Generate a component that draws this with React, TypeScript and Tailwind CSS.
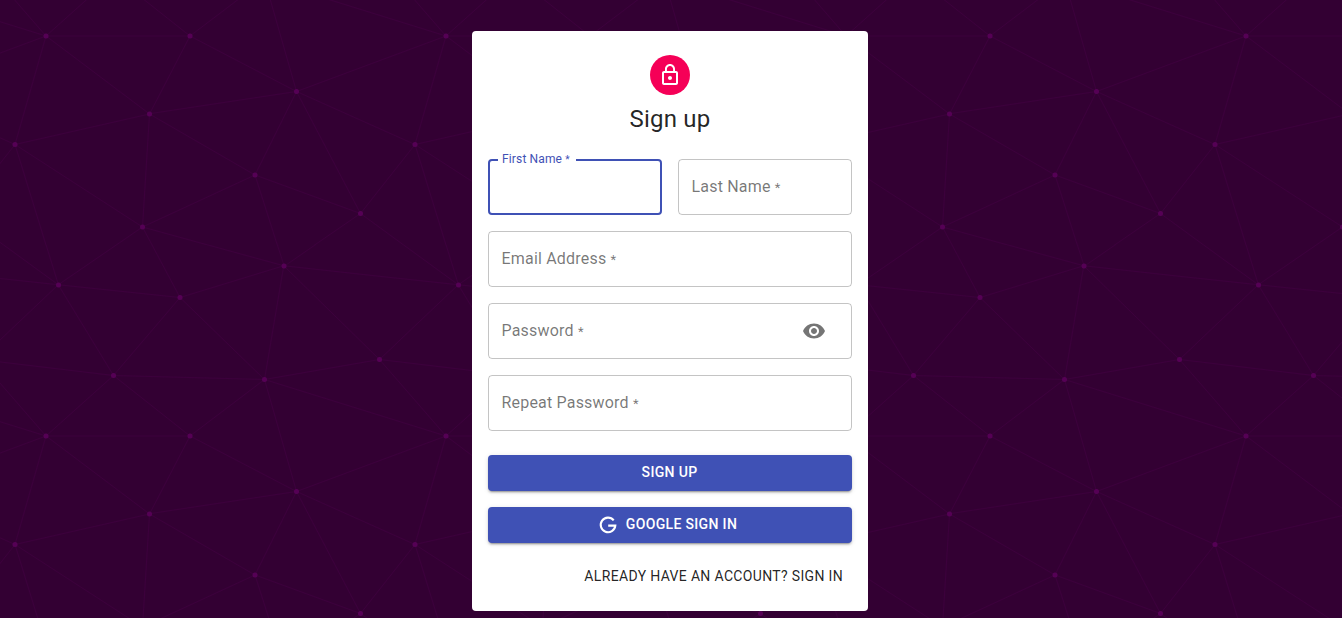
import React from "react";

const NODES: [number, number][] = [
  [769, 229], [539, 269], [603, 493], [731, 737], [520, 660], [309, 538], [295, 764],
  [40, 599], [102, 382], [127, 80], [370, 105], [578, 42], [237, 261], [390, 382],
];

const LINES = [
  "M769 229L1037 260.9M927 880L731 737 520 660 309 538 40 599 295 764 126.5 879.5 40 599-197 493 102 382-31 229 126.5 79.5-69-63",
  "M-31 229L237 261 390 382 603 493 308.5 537.5 101.5 381.5M370 905L295 764",
  "M520 660L578 842 731 737 840 599 603 493 520 660 295 764 309 538 390 382 539 269 769 229 577.5 41.5 370 105 295-36 126.5 79.5 237 261 102 382 40 599-69 737 127 880",
  "M520-140L578.5 42.5 731-63M603 493L539 269 237 261 370 105M902 382L539 269M390 382L102 382",
  "M-222 42L126.5 79.5 370 105 539 269 577.5 41.5 927 80 769 229 902 382 603 493 731 737M295-36L577.5 41.5M578 842L295 764M40-201L127 80M102 382L-261 269",
];

function Constellation() {
  return (
    <svg className="absolute inset-0 h-full w-full" aria-hidden="true">
      <defs>
        <pattern
          id="constellation"
          width="800"
          height="800"
          patternUnits="userSpaceOnUse"
          patternTransform="translate(-5 -155) scale(0.5)"
        >
          <g fill="none" stroke="#440044" strokeWidth="1">
            {LINES.map((d) => (
              <path key={d} d={d} />
            ))}
          </g>
          <g fill="#550055">
            {NODES.map(([cx, cy]) => (
              <circle key={`${cx}-${cy}`} cx={cx} cy={cy} r="5" />
            ))}
          </g>
        </pattern>
      </defs>
      <rect width="100%" height="100%" fill="url(#constellation)" />
    </svg>
  );
}

function Field({ label, children }: { label: string; children?: React.ReactNode }) {
  return (
    <div className="flex h-14 w-full items-center justify-between rounded border border-black/[0.23] pr-[25px] pl-[12.5px]">
      <label className="text-base leading-4 tracking-[0.012em] text-black/[0.54]">
        {label} <span className="text-[13px] leading-none">*</span>
      </label>
      {children}
    </div>
  );
}

function FocusedField({ label }: { label: string }) {
  return (
    <fieldset className="-mt-[5px] h-[61px] w-full rounded border-2 border-[#3f51b5] pl-2">
      <legend className="h-[11px] w-[78px] pl-1 text-xs leading-[11px] tracking-[0.012em] whitespace-nowrap text-[#3f51b5]">
        {label} <span className="text-[10px] leading-none">*</span>
      </legend>
    </fieldset>
  );
}

function ContainedButton({ children }: { children: React.ReactNode }) {
  return (
    <button className="flex h-9 w-full items-center justify-center rounded bg-[#3f51b5] pr-px pb-0.5 text-sm font-medium tracking-[0.024em] text-white uppercase shadow-[0_3px_1px_-2px_rgba(0,0,0,0.2),0_2px_2px_0_rgba(0,0,0,0.14),0_1px_5px_0_rgba(0,0,0,0.12)]">
      {children}
    </button>
  );
}

export default function App() {
  return (
    <main className="relative flex h-screen justify-center overflow-hidden bg-[#330033] pt-[31px] pr-0.5 font-[Roboto,sans-serif]">
      <Constellation />
      <section className="relative flex h-[580px] w-[396px] flex-col items-center rounded bg-white px-4 pt-6">
        <div className="flex h-10 w-10 shrink-0 items-center justify-center rounded-full bg-[#f50057]">
          <svg className="h-6 w-6" viewBox="0 0 24 24" fill="white">
            <path d="M12 17c1.1 0 2-.9 2-2s-.9-2-2-2-2 .9-2 2 .9 2 2 2zm6-9h-1V6c0-2.76-2.24-5-5-5S7 3.24 7 6v2H6c-1.1 0-2 .9-2 2v10c0 1.1.9 2 2 2h12c1.1 0 2-.9 2-2V10c0-1.1-.9-2-2-2zM8.9 6c0-1.71 1.39-3.1 3.1-3.1s3.1 1.39 3.1 3.1v2H8.9V6zM18 20H6V10h12v10z" />
          </svg>
        </div>
        <h1 className="mt-2 text-2xl leading-8 font-normal tracking-[0.2px] text-black/[0.87]">Sign up</h1>
        <form className="mt-6 flex w-full flex-col gap-4">
          <div className="grid grid-cols-2 gap-4">
            <FocusedField label="First Name" />
            <Field label="Last Name" />
          </div>
          <Field label="Email Address" />
          <Field label="Password">
            <svg className="h-6 w-6" viewBox="0 0 24 24" fill="rgba(0,0,0,0.54)">
              <path d="M12 4.5C7 4.5 2.73 7.61 1 12c1.73 4.39 6 7.5 11 7.5s9.27-3.11 11-7.5c-1.73-4.39-6-7.5-11-7.5zM12 17c-2.76 0-5-2.24-5-5s2.24-5 5-5 5 2.24 5 5-2.24 5-5 5zm0-8c-1.66 0-3 1.34-3 3s1.34 3 3 3 3-1.34 3-3-1.34-3-3-3z" />
            </svg>
          </Field>
          <Field label="Repeat Password" />
          <div className="mt-2 flex flex-col gap-4">
            <ContainedButton>Sign up</ContainedButton>
            <ContainedButton>
              <svg className="mt-0.5 mr-2 -ml-1 h-5 w-5" viewBox="0 0 20 20" fill="none" stroke="white" strokeWidth="2.1">
                <path d="M15.7 5.3A7.3 7.3 0 1 0 17.3 10.6H10.2" />
              </svg>
              Google sign in
            </ContainedButton>
            <a className="flex h-9 items-center justify-end pr-[9px] pb-0.5 pl-2 text-sm tracking-[0.024em] text-black/[0.87] uppercase">
              Already have an account? Sign in
            </a>
          </div>
        </form>
      </section>
    </main>
  );
}
